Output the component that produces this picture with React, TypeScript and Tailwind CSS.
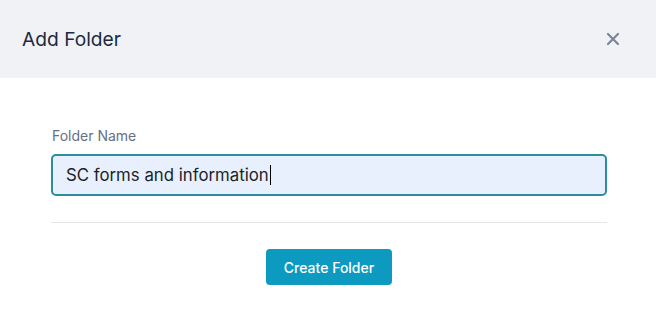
export default function App() {
    return (
        <div className="w-[656px] h-[327px] bg-white font-['Inter','Liberation_Sans',sans-serif]">
            <div className="flex items-center justify-between h-[78px] bg-[#f0f2f5] pl-[22px] pr-[36px]">
                <h2 className="text-[19.2px] text-[#1d2940]">Add Folder</h2>
                <button className="text-[#7b8698]" aria-label="Close">
                    <svg width="14" height="14" viewBox="0 0 14 14" fill="none" stroke="currentColor" strokeWidth="2.2" strokeLinecap="round">
                        <path d="M2 2L12 12M12 2L2 12" />
                    </svg>
                </button>
            </div>

            <div className="px-[51px] pt-[48px]">
                <label htmlFor="ifolder" className="block text-[14px] text-[#667085] leading-[20px] ml-[1px]">Folder Name</label>
                <div className="mt-[8px] flex items-center h-[42px] w-[556px] rounded-[5px] border-2 border-[#2b8d9d] bg-[#e8f0fe] pl-[13px]">
                    <span id="ifolder" className="text-[16.8px] text-[#1b1f27] leading-none">SC forms and information</span>
                    <span className="ml-[1px] w-[1px] h-[20px] bg-black"></span>
                </div>
                <div className="mt-[26px] h-px w-[556px] bg-[#e3e5e8]"></div>
                <div className="flex justify-center mt-[26px] pl-[2px]">
                    <button className="h-[36px] w-[126px] rounded-[4px] bg-[#0c9ac0] text-white text-[14px] font-medium">Create Folder</button>
                </div>
            </div>
        </div>
    )
}
